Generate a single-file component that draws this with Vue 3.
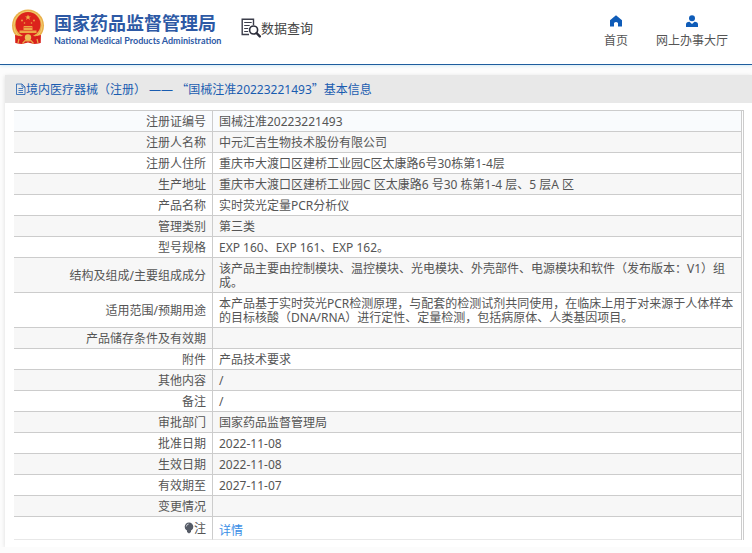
<script setup>
const rows = [
  { label: '注册证编号', value: '国械注准20223221493' },
  { label: '注册人名称', value: '中元汇吉生物技术股份有限公司' },
  { label: '注册人住所', value: '重庆市大渡口区建桥工业园C区太康路6号30栋第1-4层' },
  { label: '生产地址', value: '重庆市大渡口区建桥工业园C 区太康路6 号30 栋第1-4 层、5 层A 区' },
  { label: '产品名称', value: '实时荧光定量PCR分析仪' },
  { label: '管理类别', value: '第三类' },
  { label: '型号规格', value: 'EXP 160、EXP 161、EXP 162。' },
  { label: '结构及组成/主要组成成分', value: '该产品主要由控制模块、温控模块、光电模块、外壳部件、电源模块和软件（发布版本：V1）组成。' },
  { label: '适用范围/预期用途', value: '本产品基于实时荧光PCR检测原理，与配套的检测试剂共同使用，在临床上用于对来源于人体样本的目标核酸（DNA/RNA）进行定性、定量检测，包括病原体、人类基因项目。' },
  { label: '产品储存条件及有效期', value: '' },
  { label: '附件', value: '产品技术要求' },
  { label: '其他内容', value: '/' },
  { label: '备注', value: '/' },
  { label: '审批部门', value: '国家药品监督管理局' },
  { label: '批准日期', value: '2022-11-08' },
  { label: '生效日期', value: '2022-11-08' },
  { label: '有效期至', value: '2027-11-07' },
  { label: '变更情况', value: '' },
]
</script>

<template>
  <div class="page">
    <header class="top">
      <a class="brand" href="#">
        <svg class="emblem" viewBox="0 0 34 36" aria-hidden="true">
          <path d="M5 23L29 23L29.500 34L23 35L17 33.500L11 35L4.500 34Z" fill="#d8201c" />
          <circle cx="17" cy="16.500" r="16" fill="#e9b04a" />
          <circle cx="17" cy="16.500" r="14.200" fill="none" stroke="#f4cb74" stroke-width="1" />
          <circle cx="17" cy="15.500" r="12.500" fill="#dc231c" />
          <path d="M17 5.500l.8 2h2.100l-1.700 1.300.7 2.100-1.900-1.300-1.900 1.300.7-2.100-1.700-1.300h2.100z" fill="#f0b04a" />
          <g fill="#eda646">
            <circle cx="11" cy="11.500" r=".9" /><circle cx="23" cy="11.500" r=".9" />
            <circle cx="13.500" cy="14" r=".8" /><circle cx="20.500" cy="14" r=".8" />
            <path d="M12 18.500l1-1.500h8l1 1.500zM12.500 19h9v2h-9zM8.500 21.500h17V24h-17z" />
          </g>
          <path d="M4 26Q10 28 13 26.500L21 26.500Q24 28 30 26L29.500 34L24 34.500L21 32L13 32L10 34.500L4.500 34Z" fill="#d8201c" />
          <circle cx="17" cy="28.500" r="3.200" fill="#edbd56" />
          <path d="M11.500 34.500l2.500-3h6l2.500 3M8 30l-1 4M26 30l1 4" fill="none" stroke="#e9a84a" stroke-width="1.200" />
        </svg>
        <span class="names">
          <span class="cn">国家药品监督管理局</span>
          <span class="en">National Medical Products Administration</span>
        </span>
      </a>
      <a class="query" href="#">
        <svg class="query-icon" viewBox="0 0 20 20" aria-hidden="true">
          <path d="M12.500 7V1.300H1.200v15.200H8" fill="none" stroke="#3b3d4a" stroke-width="1.400" />
          <path d="M3.200 4.500h7.500M3.200 7.500h5.500M3.200 10.500h4M3.200 13.500h4" stroke="#3b3d4a" stroke-width="1.200" />
          <circle cx="12.600" cy="12" r="4" fill="#fff" stroke="#2b2d3a" stroke-width="1.600" />
          <path d="M15.500 15l3.300 3.400" stroke="#2b2d3a" stroke-width="2.400" stroke-linecap="round" />
        </svg>
        <span>数据查询</span>
      </a>
      <nav class="nav">
        <a href="#">
          <svg viewBox="0 0 14 12" aria-hidden="true"><path d="M7 .3 1 5.200V11.500h4V8q2-2 4 0v3.500h4V5.200z" fill="#0f5cb8" /></svg>
          <span>首页</span>
        </a>
        <a href="#">
          <svg viewBox="0 0 14 12" aria-hidden="true"><circle cx="7" cy="3.200" r="3" fill="#0f5cb8" /><path d="M1 12V9.500Q1 7 4.500 6.800L7 9l2.500-2.200Q13 7 13 9.500V12z" fill="#0f5cb8" /></svg>
          <span>网上办事大厅</span>
        </a>
      </nav>
    </header>

    <main class="panel">
      <h1 class="title">
        <svg viewBox="0 0 11 12" aria-hidden="true"><path d="M1.500 1h5.500l3 3v7.500H1.500zM7 1v3h3M3.500 5.500h4.500M3.500 7.500h4.500M3.500 9.500h4.500" fill="none" stroke="#1a5cb0" stroke-width=".8" /></svg>
        <span>境内医疗器械（注册） —— <span class="quote">“</span>国械注准20223221493<span class="quote">”</span>基本信息</span>
      </h1>
      <div class="content">
        <table>
          <tbody>
            <tr v-for="row in rows" :key="row.label">
              <th scope="row">{{ row.label }}</th>
              <td>{{ row.value }}</td>
            </tr>
            <tr class="note">
              <th scope="row">
                <svg class="bulb" viewBox="0 0 10 12" aria-hidden="true"><circle cx="5" cy="4.700" r="4.300" fill="#555b66" /><path d="M3 8h4v2L5 11.500l-2-1.500z" fill="#555b66" /><path d="M2.300 4.500Q2.500 2.300 4.700 2" fill="none" stroke="#c4c8ce" /></svg>注
              </th>
              <td><a href="#">详情</a></td>
            </tr>
          </tbody>
        </table>
      </div>
    </main>
  </div>
</template>

<style>
body {
  margin: 0;
  background: #fcfcfc;
}
</style>

<style scoped>
.page {
  font-family: "Noto Sans", "Noto Sans CJK SC", sans-serif;
  font-size: 12px;
  line-height: 14px;
  color: #555;
}
a {
  color: inherit;
  text-decoration: none;
}
.top {
  display: flex;
  align-items: flex-start;
  box-sizing: border-box;
  height: 65px;
  padding: 9px 24px 0 11px;
  background: #fff;
  border-bottom: 1px solid #1f5d9e;
  box-shadow: 0 1px 3px #d3eaf6;
}
.brand {
  display: flex;
  gap: 9px;
  color: #2d59a5;
}
.emblem {
  width: 34px;
  height: 36px;
}
.names {
  display: flex;
  flex-direction: column;
  width: 162px;
  padding-top: 3px;
  white-space: nowrap;
}
.cn {
  font-size: 18px;
  font-weight: 700;
  line-height: 22px;
}
.en {
  font-family: Lato, sans-serif;
  font-size: 9px;
  font-weight: 700;
  line-height: 14px;
}
.query {
  display: flex;
  align-items: center;
  padding-top: 9px;
  margin-left: 25px;
  font-size: 13px;
  line-height: 20px;
  color: #444;
}
.query-icon {
  width: 20px;
  height: 20px;
}
.nav {
  display: flex;
  gap: 28px;
  margin-left: auto;
  padding-top: 6px;
}
.nav a {
  display: flex;
  flex-direction: column;
  align-items: center;
  gap: 7px;
}
.nav svg {
  width: 14px;
  height: 12px;
}
.panel {
  margin: 10px 0 0 5px;
  background: #fff;
  box-shadow: 0 1px 4px #ddd;
}
.title {
  display: flex;
  align-items: center;
  height: 28px;
  margin: 0;
  padding-left: 10px;
  font-size: 12px;
  font-weight: 400;
  color: #1a5cb0;
  background: #e8e8e8;
}
.title svg {
  width: 11px;
  height: 12px;
}
.quote {
  font-family: "Noto Sans CJK SC", sans-serif;
}
.content {
  padding: 7px 8px 7px 9px;
}
table {
  width: 100%;
  border-collapse: separate;
  border-spacing: 0;
  border-top: 1px solid #ccc;
  border-right: 3px double #ccc;
}
th,
td {
  padding: 4px 6px 2px;
  border-bottom: 1px solid #ccc;
  font-weight: 400;
  vertical-align: middle;
}
th {
  width: 186px;
  border-right: 1px solid #ccc;
  text-align: right;
}
td {
  text-align: left;
  height: 14px;
}
tr:nth-child(even) {
  background: #f7f7f7;
}
tr:first-child {
  background: #f9fbfd;
}
.note th,
.note td {
  height: 16px;
  border-bottom-color: #e8e8e8;
}
.note td {
  padding-top: 6px;
  padding-bottom: 0;
}
.note a {
  color: #3a8ee6;
}
.bulb {
  width: 10px;
  height: 12px;
  vertical-align: -1px;
}
</style>
